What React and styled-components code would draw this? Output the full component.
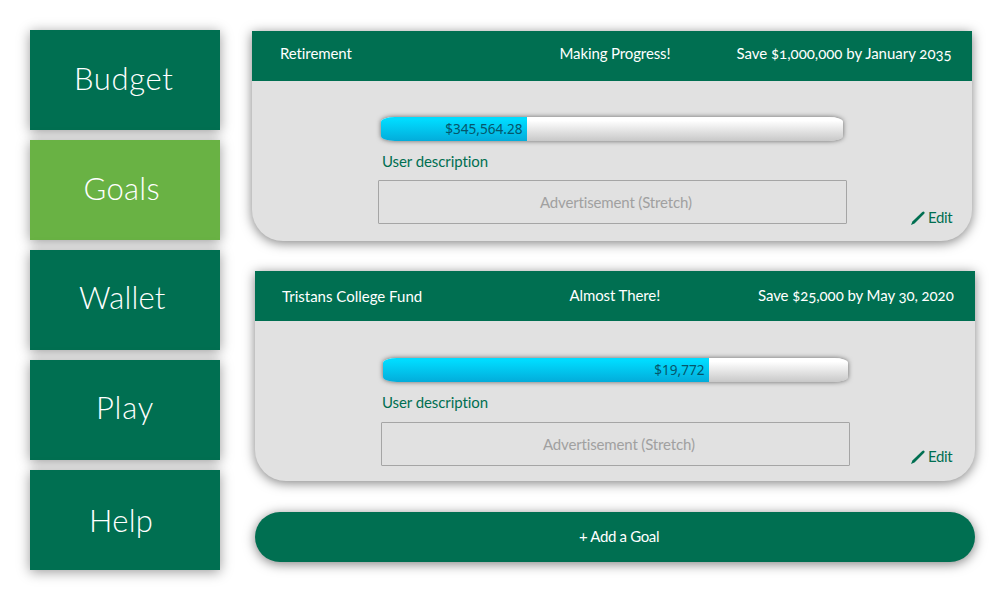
import React from "react";
import styled, { createGlobalStyle } from "styled-components";

const GlobalStyle = createGlobalStyle`
  * { box-sizing: border-box; }
  body { margin: 0; background: #fff; overflow: hidden; }
`;

const Page = styled.div`
  display: flex;
  gap: 32px;
  width: 1000px;
  height: 600px;
  padding: 30px 25px 30px 30px;
  font-family: Lato, "Open Sans", sans-serif;
  font-size: 15px;
  line-height: 20px;
  white-space: nowrap;
`;

const Nav = styled.nav`
  display: flex;
  flex-direction: column;
  gap: 10px;
  width: 190px;
`;

const NavItem = styled.a`
  display: flex;
  height: 100px;
  padding: ${(p) => p.$top}px 0 0 ${(p) => p.$left}px;
  background: ${(p) => (p.$active ? "#69b244" : "#006f51")};
  box-shadow: 0 2px 12px rgba(0, 0, 0, 0.4);
  color: #fff;
  font-size: 31px;
  font-weight: 300;
  line-height: 40px;
  letter-spacing: ${(p) => p.$track}px;
`;

const Main = styled.main`
  display: flex;
  flex-direction: column;
  width: 723px;
  padding-top: 1px;
`;

const Card = styled.section`
  width: 720px;
  height: 210px;
  margin: 0 0 30px ${(p) => p.$indent}px;
  border-radius: 0 0 31px 31px;
  background: #e1e1e1;
  box-shadow: 0 2px 12px rgba(0, 0, 0, 0.5);
`;

const CardHeader = styled.header`
  display: grid;
  grid-template-columns: ${(p) => p.$columns};
  height: 50px;
  padding-left: ${(p) => p.$pad}px;
  background: #006f51;
  color: #fff;
`;

const HeaderText = styled.span`
  padding-top: ${(p) => p.$top}px;
  letter-spacing: ${(p) => p.$track}px;
  font-variant-numeric: oldstyle-nums;
`;

const CardBody = styled.div`
  display: flex;
  height: 160px;
  padding-left: 126px;
`;

const Details = styled.div`
  display: flex;
  flex-direction: column;
  width: 469px;
  padding-top: ${(p) => p.$top}px;
`;

const Track = styled.div`
  width: ${(p) => p.$width}px;
  height: 24px;
  margin-left: ${(p) => p.$left}px;
  border-radius: 14px / 5px;
  overflow: hidden;
  background: linear-gradient(#fff 15%, #c8c8c8);
  box-shadow: 0 0 5px rgba(0, 0, 0, 0.55);
`;

const Fill = styled.div`
  height: 24px;
  padding-right: 4.5px;
  background: linear-gradient(#00dcff 10%, #03acda);
  color: #05566b;
  font: 13.6px/24px "Noto Sans", sans-serif;
  text-align: right;
`;

const Description = styled.div`
  margin: 10px 0 0 ${(p) => p.$left}px;
  color: #006f51;
  letter-spacing: -0.08px;
`;

const Advert = styled.div`
  height: 44px;
  margin-top: ${(p) => p.$gap}px;
  padding: 11px 0 0 161px;
  border: 1px solid #a5a5a5;
  border-radius: 1px;
  color: #a0a0a0;
  letter-spacing: -0.15px;
`;

const EditLink = styled.a`
  display: flex;
  align-items: flex-start;
  gap: 3px;
  margin: ${(p) => p.$top}px 0 0 ${(p) => p.$left}px;
  height: 20px;
  color: #006f51;
  letter-spacing: -0.4px;

  svg {
    margin-top: 4px;
  }
`;

const AddButton = styled.button`
  width: 720px;
  height: 50px;
  margin: 1px 0 0 3px;
  padding: 0 0 2px;
  border: 0;
  border-radius: 25px;
  background: #006f51;
  box-shadow: 0 2px 12px rgba(0, 0, 0, 0.5);
  color: #fff;
  font: inherit;
  letter-spacing: -0.35px;
  text-align: left;
  text-indent: 324px;
`;

const Pencil = () => (
  <svg width="14" height="14" viewBox="0 0 14 14" fill="#006f51">
    <path d="M0 14 L1.4 10.4 L11.3 1 Q12.5 0 13.4 1 Q14 1.8 13.2 2.7 L3.5 12.4 Z" />
  </svg>
);

const navItems = [
  { label: "Budget", left: 44, top: 28, track: 0.65 },
  { label: "Goals", left: 53.5, top: 28, track: 0.3, active: true },
  { label: "Wallet", left: 49, top: 27, track: 0.2 },
  { label: "Play", left: 66, top: 27, track: 0.8 },
  { label: "Help", left: 59, top: 30, track: 0.3 },
];

const goals = [
  {
    indent: 0,
    columns: "279.5px 177px auto",
    headPad: 28,
    header: [["Retirement", 12, -0.1], ["Making Progress!", 12, -0.12], ["Save $1,000,000 by January 2035", 12, -0.02]],
    top: 36, barLeft: 3, barWidth: 462, fill: 146,
    amount: "$345,564.28", descLeft: 4, adGap: 9, editTop: 126, editLeft: 64,
  },
  {
    indent: 3,
    columns: "287.5px 188.5px auto",
    headPad: 27,
    header: [["Tristans College Fund", 15, 0], ["Almost There!", 14, -0.1], ["Save $25,000 by May 30, 2020", 14, -0.08]],
    top: 37, barLeft: 2, barWidth: 465, fill: 326,
    amount: "$19,772", descLeft: 1, adGap: 10, editTop: 125, editLeft: 61,
  },
];

export default function App() {
  return (
    <>
      <GlobalStyle />
      <Page>
        <Nav>
          {navItems.map((n) => (
            <NavItem key={n.label} $active={n.active} $left={n.left} $top={n.top} $track={n.track}>
              {n.label}
            </NavItem>
          ))}
        </Nav>
        <Main>
          {goals.map((g) => (
            <Card key={g.amount} $indent={g.indent}>
              <CardHeader $columns={g.columns} $pad={g.headPad}>
                {g.header.map(([text, top, track]) => (
                  <HeaderText key={text} $top={top} $track={track}>{text}</HeaderText>
                ))}
              </CardHeader>
              <CardBody>
                <Details $top={g.top}>
                  <Track $left={g.barLeft} $width={g.barWidth}>
                    <Fill style={{ width: g.fill }}>{g.amount}</Fill>
                  </Track>
                  <Description $left={g.descLeft}>User description</Description>
                  <Advert $gap={g.adGap}>Advertisement (Stretch)</Advert>
                </Details>
                <EditLink $top={g.editTop} $left={g.editLeft}>
                  <Pencil />
                  Edit
                </EditLink>
              </CardBody>
            </Card>
          ))}
          <AddButton>+ Add a Goal</AddButton>
        </Main>
      </Page>
    </>
  );
}
